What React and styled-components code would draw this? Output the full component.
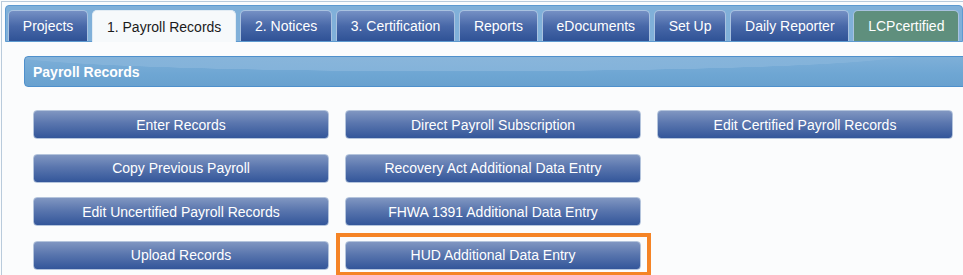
import React from "react";
import styled, { createGlobalStyle } from "styled-components";

const GlobalStyle = createGlobalStyle`
  html, body {
    margin: 0;
    padding: 0;
    background: #fbfcfd;
    overflow: hidden;
  }
  body {
    font-family: "Liberation Sans", Arial, sans-serif;
  }
`;

const Frame = styled.div`
  margin: 1px 0 0 1px;
  width: 1000px;
  height: 274px;
  border-top: 1px solid #b9cbdc;
  border-left: 1px solid #b9cbdc;
  padding: 3px 0 0 3px;
  box-sizing: border-box;
  background: #fbfcfd;
  overflow: hidden;
`;

const TabStrip = styled.div`
  width: 958px;
  box-sizing: border-box;
  display: flex;
  gap: 4px;
  padding: 4px 2px 0 2px;
  background: #80b0d9;
  border: 1px solid #5d9ad0;
  border-radius: 4px 4px 0 0;
  height: 37px;
`;

const Tab = styled.div`
  flex-shrink: 0;
  height: 31px;
  box-sizing: border-box;
  display: flex;
  align-items: center;
  justify-content: center;
  padding: 0 13.8px;
  border: 1px solid ${({ $active }) => ($active ? "#e2ecf4" : "#a9c2e0")};
  border-bottom: none;
  border-radius: 5px 5px 0 0;
  font-size: 14px;
  white-space: nowrap;
  color: ${({ $active }) => ($active ? "#1b1b1b" : "#ffffff")};
  background: ${({ $active, $green }) =>
    $active
      ? "#f6f9fb"
      : $green
      ? "#5f8f7d"
      : "linear-gradient(to bottom, #7590c4 0%, #4868a8 50%, #2f5296 100%)"};
  ${({ $active }) => ($active ? "height: 32px; margin-bottom: -1px;" : "")}
`;

const Content = styled.div`
  padding: 14px 0 0 19px;
`;

const PanelHeader = styled.div`
  width: 960px;
  height: 31px;
  box-sizing: border-box;
  border: 1px solid #4f90cc;
  border-radius: 4px;
  display: flex;
  align-items: center;
  padding-left: 8px;
  color: #ffffff;
  font-weight: bold;
  font-size: 14px;
  background:
    radial-gradient(ellipse 75% 95% at 45% -10%, #8ab6db 0%, #84b3da 62%, rgba(0,0,0,0) 63%),
    linear-gradient(to bottom, #7eafd8 0%, #6ea6d3 60%, #69a1cf 100%);
`;

const ButtonGrid = styled.div`
  display: grid;
  grid-template-columns: repeat(3, 296px);
  column-gap: 16px;
  row-gap: 14.5px;
  padding: 23px 0 0 9px;
`;

const ActionButton = styled.div`
  position: relative;
  height: 29px;
  box-sizing: border-box;
  display: flex;
  align-items: center;
  justify-content: center;
  border: 1px solid #b4c4dc;
  border-radius: 4px;
  color: #ffffff;
  font-size: 14px;
  white-space: nowrap;
  background: linear-gradient(to bottom, #8096c1 0%, #5a76ae 45%, #33569a 100%);
  grid-column: ${({ $col }) => $col};
  grid-row: ${({ $row }) => $row};

  ${({ $highlight }) =>
    $highlight
      ? `&::after {
          content: "";
          position: absolute;
          left: -10px;
          right: -11px;
          top: -9px;
          bottom: -7px;
          border: 4px solid #f58426;
        }`
      : ""}
`;

const tabs = [
  { label: "Projects" },
  { label: "1. Payroll Records", active: true },
  { label: "2. Notices" },
  { label: "3. Certification" },
  { label: "Reports" },
  { label: "eDocuments" },
  { label: "Set Up" },
  { label: "Daily Reporter" },
  { label: "LCPcertified", green: true },
];

const buttons = [
  { label: "Enter Records", col: 1, row: 1 },
  { label: "Copy Previous Payroll", col: 1, row: 2 },
  { label: "Edit Uncertified Payroll Records", col: 1, row: 3 },
  { label: "Upload Records", col: 1, row: 4 },
  { label: "Direct Payroll Subscription", col: 2, row: 1 },
  { label: "Recovery Act Additional Data Entry", col: 2, row: 2 },
  { label: "FHWA 1391 Additional Data Entry", col: 2, row: 3 },
  { label: "HUD Additional Data Entry", col: 2, row: 4, highlight: true },
  { label: "Edit Certified Payroll Records", col: 3, row: 1 },
];

export default function App() {
  return (
    <>
      <GlobalStyle />
      <Frame>
        <TabStrip>
          {tabs.map((t) => (
            <Tab key={t.label} $active={t.active} $green={t.green}>
              {t.label}
            </Tab>
          ))}
        </TabStrip>
        <Content>
          <PanelHeader>Payroll Records</PanelHeader>
          <ButtonGrid>
            {buttons.map((b) => (
              <ActionButton
                key={b.label}
                $col={b.col}
                $row={b.row}
                $highlight={b.highlight}
              >
                {b.label}
              </ActionButton>
            ))}
          </ButtonGrid>
        </Content>
      </Frame>
    </>
  );
}
